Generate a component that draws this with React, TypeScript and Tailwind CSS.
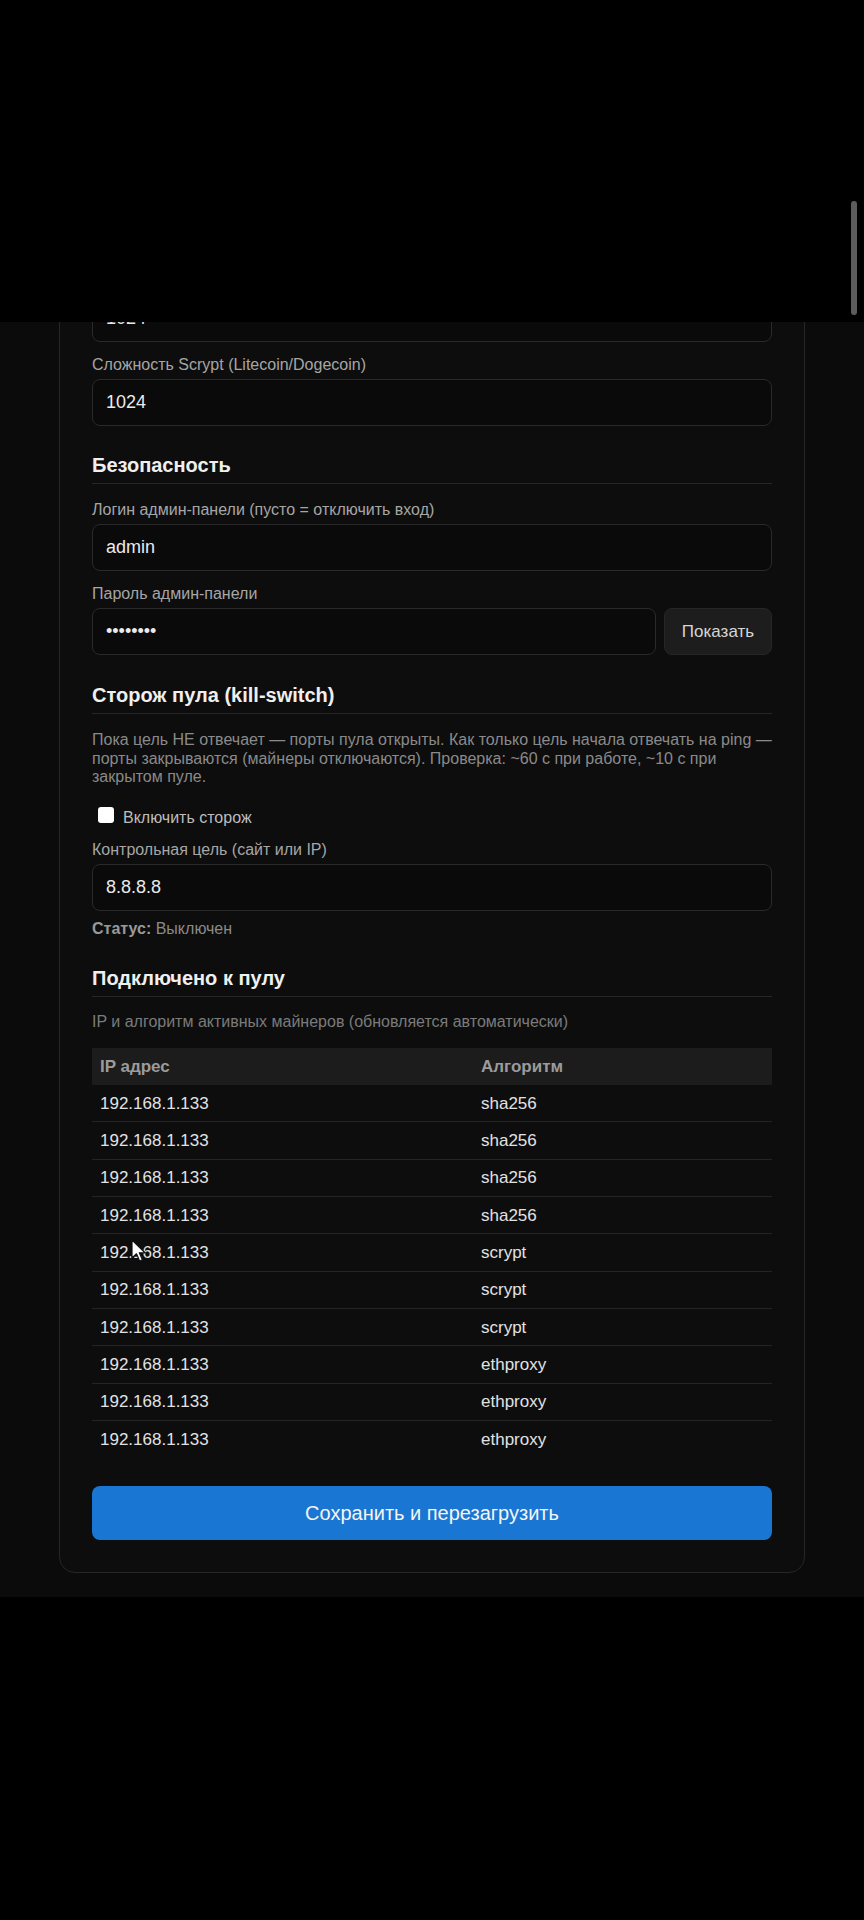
import React from 'react';

const miners: { ip: string; algo: string }[] = [
  { ip: '192.168.1.133', algo: 'sha256' },
  { ip: '192.168.1.133', algo: 'sha256' },
  { ip: '192.168.1.133', algo: 'sha256' },
  { ip: '192.168.1.133', algo: 'sha256' },
  { ip: '192.168.1.133', algo: 'scrypt' },
  { ip: '192.168.1.133', algo: 'scrypt' },
  { ip: '192.168.1.133', algo: 'scrypt' },
  { ip: '192.168.1.133', algo: 'ethproxy' },
  { ip: '192.168.1.133', algo: 'ethproxy' },
  { ip: '192.168.1.133', algo: 'ethproxy' },
];

const inputCls =
  'block w-full h-[47px] rounded-[8px] border border-[#2a2a2a] bg-[#0a0a0a] px-[13px] text-[18px] text-[#eaeaea] outline-none';

const Label: React.FC<{ children: React.ReactNode; className?: string }> = ({ children, className = '' }) => (
  <label className={`block mb-[4px] text-[16px] leading-[20px] text-[#a6a6a6] ${className}`}>{children}</label>
);

const SectionTitle: React.FC<{ children: React.ReactNode; className?: string }> = ({ children, className = '' }) => (
  <h3 className={`pb-[6px] border-b border-[#262626] text-[20px] leading-[24px] font-bold text-[#efefef] ${className}`}>
    {children}
  </h3>
);

// mouse pointer captured over the miners list
const Pointer = () => (
  <svg className="absolute left-[39px] top-[5px] w-[15px] h-[24px]" viewBox="0 0 15 24">
    <path d="M1 1 L1 19 L5.5 14.8 L8.6 22 L11.4 20.8 L8.3 13.8 L14 13.8 Z" fill="#ffffff" stroke="#111111" strokeWidth="1.2" strokeLinejoin="round" />
  </svg>
);

export default function App() {
  return (
    <div className="min-h-[1920px] bg-black font-['Liberation_Sans',Arial,sans-serif]">
      {/* status area above the page */}
      <div className="relative h-[322px] bg-black">
        <div className="absolute right-[7px] top-[201px] w-[6px] h-[114px] rounded-full bg-[#5c5c5c]" />
      </div>

      <div className="overflow-hidden bg-[#0b0b0b] px-[59px] pb-[24px]">
        <div className="-mt-[60px] rounded-[16px] border border-[#262626] bg-[#0d0d0d] p-[32px]">
          <input className={inputCls} readOnly defaultValue="1024" />

          <div className="mt-[13px]">
            <Label>Сложность Scrypt (Litecoin/Dogecoin)</Label>
            <input className={inputCls} readOnly defaultValue="1024" />
          </div>

          <SectionTitle className="mt-[27px]">Безопасность</SectionTitle>

          <div className="mt-[16px]">
            <Label>Логин админ-панели (пусто = отключить вход)</Label>
            <input className={inputCls} readOnly defaultValue="admin" />
          </div>

          <div className="mt-[13px]">
            <Label>Пароль админ-панели</Label>
            <div className="flex gap-[8px]">
              <input type="password" className={`${inputCls} flex-1`} readOnly defaultValue="admin123" />
              <button className="h-[47px] w-[108px] shrink-0 rounded-[8px] border border-[#262626] bg-[#1d1d1d] text-[17px] text-[#d6d6d6]">
                Показать
              </button>
            </div>
          </div>

          <SectionTitle className="mt-[28px]">Сторож пула (kill-switch)</SectionTitle>

          <p className="mt-[17px] text-[16px] leading-[18.7px] text-[#8a8a8a]">
            Пока цель НЕ отвечает — порты пула открыты. Как только цель начала отвечать на ping — порты закрываются
            (майнеры отключаются). Проверка: ~60 с при работе, ~10 с при закрытом пуле.
          </p>

          <label className="mt-[20px] flex items-start">
            <span className="ml-[6px] w-[16px] h-[16px] rounded-[3px] bg-white" />
            <span className="ml-[9px] mt-[1px] text-[16px] leading-[20px] text-[#bdbdbd]">Включить сторож</span>
          </label>

          <div className="mt-[12px]">
            <Label>Контрольная цель (сайт или IP)</Label>
            <input className={inputCls} readOnly defaultValue="8.8.8.8" />
          </div>

          <div className="mt-[8px] text-[16px] leading-[20px] text-[#8a8a8a]">
            <b className="font-bold text-[#999999]">Статус:</b> Выключен
          </div>

          <SectionTitle className="mt-[27px]">Подключено к пулу</SectionTitle>

          <p className="mt-[16px] text-[16px] leading-[18.7px] text-[#7b7b7b]">
            IP и алгоритм активных майнеров (обновляется автоматически)
          </p>

          <div className="mt-[16px]">
            <div className="grid grid-cols-[381px_1fr] h-[37.33px] items-center bg-[#1c1c1c] text-[17px] font-bold text-[#9b9b9b]">
              <div className="px-[8px]">IP адрес</div>
              <div className="px-[8px]">Алгоритм</div>
            </div>
            {miners.map((m, i) => (
              <div
                key={i}
                className={`relative grid grid-cols-[381px_1fr] h-[37.33px] items-center text-[17px] text-[#e2e2e2] ${
                  i < miners.length - 1 ? 'border-b border-[#242424]' : ''
                }`}
              >
                <div className="px-[8px]">{m.ip}</div>
                <div className="px-[8px]">{m.algo}</div>
                {i === 4 && <Pointer />}
              </div>
            ))}
          </div>

          <button className="mt-[28px] block w-full h-[54px] rounded-[8px] bg-[#1976d2] text-[20px] text-[#f4f4f4]">
            Сохранить и перезагрузить
          </button>
        </div>
      </div>
    </div>
  );
}
